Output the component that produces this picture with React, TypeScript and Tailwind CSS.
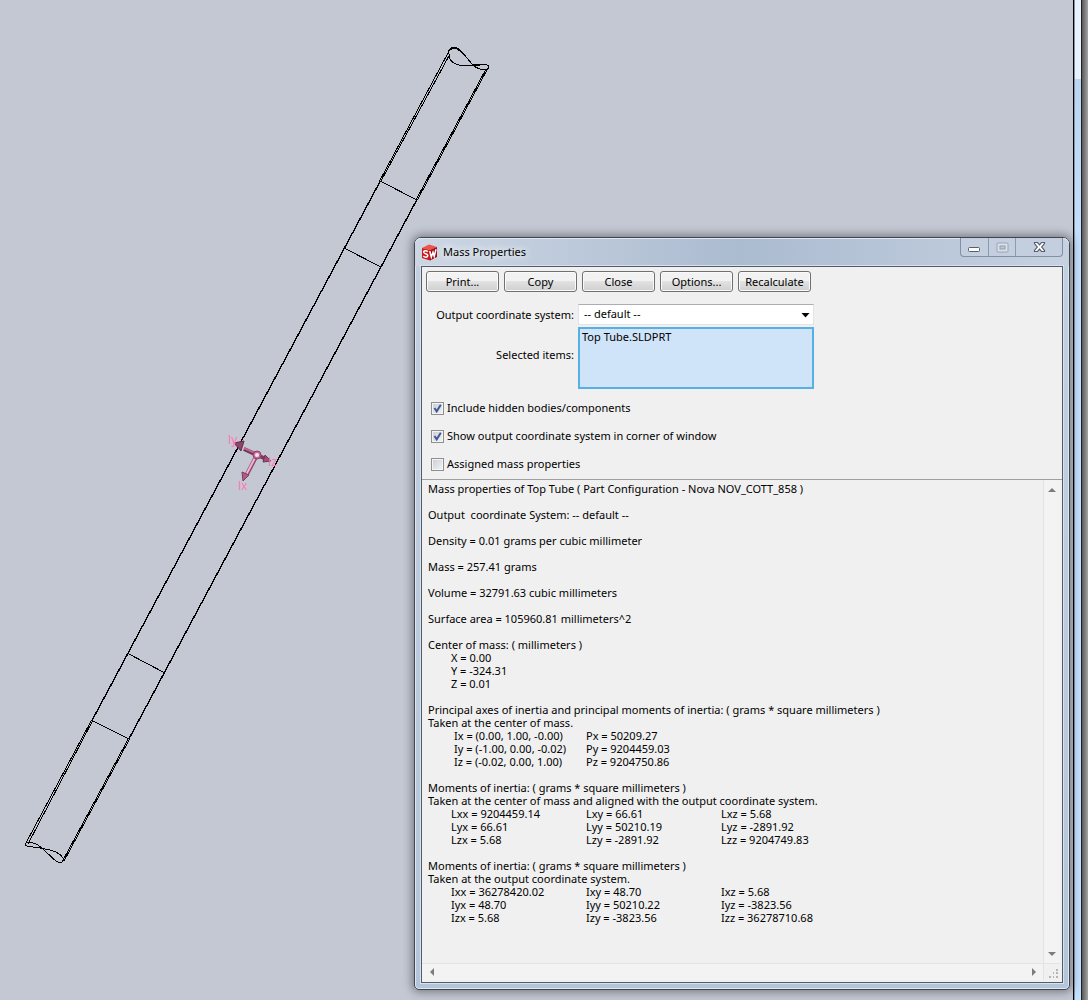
import { useState } from "react";
import type { ReactNode } from "react";

const toolbar = ["Print...", "Copy", "Close", "Options...", "Recalculate"];

const principal = [
  ["Ix = (0.00, 1.00, -0.00)", "Px = 50209.27"],
  ["Iy = (-1.00, 0.00, -0.02)", "Py = 9204459.03"],
  ["Iz = (-0.02, 0.00, 1.00)", "Pz = 9204750.86"],
];

const momentsAtCenter = [
  ["Lxx = 9204459.14", "Lxy = 66.61", "Lxz = 5.68"],
  ["Lyx = 66.61", "Lyy = 50210.19", "Lyz = -2891.92"],
  ["Lzx = 5.68", "Lzy = -2891.92", "Lzz = 9204749.83"],
];

const momentsAtOutput = [
  ["Ixx = 36278420.02", "Ixy = 48.70", "Ixz = 5.68"],
  ["Iyx = 48.70", "Iyy = 50210.22", "Iyz = -3823.56"],
  ["Izx = 5.68", "Izy = -3823.56", "Izz = 36278710.68"],
];

function TubeDrawing() {
  return (
    <svg
      className="absolute left-0 top-0"
      width="520"
      height="900"
      viewBox="0 0 520 900"
      fill="none"
    >
      <g stroke="#000" strokeWidth="1" shapeRendering="crispEdges">
        {/* tube walls: double at the butted ends, single in the middle */}
        <path d="M448 53 L379.6 181" />
        <path d="M450 54 L381 181" />
        <path d="M380.3 181 L92.3 720" strokeWidth="1.4" />
        <path d="M91.6 720 L26 843" />
        <path d="M93 720 L28 844" />
        <path d="M486 69 L416 200" />
        <path d="M488 68 L417.4 200" />
        <path d="M416.7 200 L128.9 739" strokeWidth="1.4" />
        <path d="M128.2 739 L62 862" />
        <path d="M129.6 739 L64 861" />
        {/* segment lines */}
        <path d="M380 181 L417 200" />
        <path d="M344 248 L381 267" />
        <path d="M127 653 L165 673" />
        <path d="M91 720 L129 739" />
        {/* mitred ends */}
        <path d="M448 54 C449 48 452 47 454 47 C461 48 466 58 474 66 C478 69 483 70 487 70 C489 68 489 65 487 65 C482 64 477 66 464 66 C455 65 449 62 449 54" />
        <path d="M450 50 C452 48 457 47 459 51" />
        <path d="M472 65 L487 64" />
        <path d="M26 843 C31 841 37 844 42 848 C48 853 53 860 58 862 C62 864 64 861 63 858 C60 853 52 850 45 849 C37 847 31 847 27 846 C25 845 25 844 26 843" />
      </g>

      {/* principal axes triad */}
      <g>
        <path d="M257 455 L244 449" stroke="#6d3452" strokeWidth="4" />
        <path d="M257 454 L244 448" stroke="#c0668f" strokeWidth="2" />
        <path d="M234 443 L244 441 L241 451 Z" fill="#8e4668" stroke="#5e2c46" strokeWidth="1" />
        <path d="M257 455 L266 459" stroke="#7c3c5c" strokeWidth="4" />
        <path d="M271 461 L263 462 L265 455 Z" fill="#a34f78" stroke="#6b3350" strokeWidth="1" />
        <path d="M257 455 L246 476" stroke="#8b4567" strokeWidth="4" />
        <path d="M256 456 L246 475" stroke="#f3b3d2" strokeWidth="2" />
        <path d="M243 481 L242 472 L249 475 Z" fill="#b45a86" stroke="#7b3c5c" strokeWidth="1" />
        <circle cx="257" cy="455" r="4" fill="#c46c97" stroke="#8b4567" />
        <circle cx="257" cy="455" r="2" fill="#ffe0ef" />
        <g fill="#ff78b8" className="font-['Liberation_Sans',sans-serif] text-[12px]">
          <text x="228" y="444">Iy</text>
          <text x="268" y="466">Iz</text>
          <text x="238" y="490">Ix</text>
        </g>
      </g>
    </svg>
  );
}

function AppIcon() {
  return (
    <svg width="17" height="17" viewBox="0 0 17 17">
      <path d="M1 4 L8 0.5 L16 3 L9 6 Z" fill="#f0524a" />
      <path d="M1 4 L9 6 L9 16.5 L1 14 Z" fill="#cb181d" />
      <path d="M9 6 L16 3 L16 13 L9 16.5 Z" fill="#a00b12" />
      <path
        d="M6.8 7.6 C5 6 2.3 6.6 2.8 8.4 C3.3 10 6.6 9.6 6.8 11.6 C6.8 13.6 4 13.6 2.3 12"
        fill="none"
        stroke="#fff"
        strokeWidth="1.5"
      />
      <path
        d="M8.8 7 L10.3 13.2 L12 8.3 L13.2 12.4 L15 5.2"
        fill="none"
        stroke="#fff"
        strokeWidth="1.5"
      />
    </svg>
  );
}

function CaptionButtons() {
  return (
    <div className="mr-[6px] flex h-[19px] self-start rounded-b border border-t-0 border-[#8390a3] bg-[#c3cedf]">
      <button aria-label="Minimize" className="flex w-7 items-center justify-center border-r border-[#8f9bad]">
        <svg width="13" height="13" viewBox="0 0 13 13">
          <rect x="0.5" y="6.5" width="11" height="4" rx="1" fill="#fff" stroke="#555e6b" />
        </svg>
      </button>
      <button aria-label="Maximize" disabled className="flex w-[27px] items-center justify-center border-r border-[#8f9bad]">
        <svg width="13" height="13" viewBox="0 0 13 13">
          <rect x="1" y="2" width="11" height="9" rx="1" fill="#d9e0ea" stroke="#98a4b5" />
          <rect x="4" y="5" width="5" height="3" fill="#bcc8d8" stroke="#8f9bad" />
        </svg>
      </button>
      <button aria-label="Close window" className="flex w-[46px] items-center justify-center">
        <svg width="13" height="12" viewBox="0 0 13 12">
          <path
            d="M1.5 1.5 H4.5 L6.5 3.8 L8.5 1.5 H11.5 V2.5 L8.7 6 L11.5 9.5 V10.5 H8.5 L6.5 8.2 L4.5 10.5 H1.5 V9.5 L4.3 6 L1.5 2.5 Z"
            fill="#fff"
            stroke="#555e6b"
            strokeWidth="1.2"
          />
        </svg>
      </button>
    </div>
  );
}

function CheckRow({ label, initial }: { label: string; initial: boolean }) {
  const [checked, setChecked] = useState(initial);
  return (
    <label className="flex h-7 items-center gap-[3px]">
      <span className="relative flex">
        <input
          type="checkbox"
          checked={checked}
          onChange={(e) => setChecked(e.target.checked)}
          className="h-[13px] w-[13px] appearance-none border border-[#8e8f8f] bg-linear-to-br from-[#c9cdd3] to-[#f4f4f4] shadow-[inset_0_0_0_1px_#f4f4f4]"
        />
        {checked && (
          <svg
            className="pointer-events-none absolute left-0 top-0"
            width="13"
            height="13"
            viewBox="0 0 13 13"
          >
            <path d="M3.5 6 L5.7 9.3 L9.8 2.8" fill="none" stroke="#40599c" strokeWidth="2" />
          </svg>
        )}
      </span>
      {label}
    </label>
  );
}

function Matrix({ rows, className }: { rows: string[][]; className: string }) {
  return (
    <table className={`border-collapse ${className}`}>
      <tbody>
        {rows.map((row) => (
          <tr key={row[0]}>
            {row.map((cell, i) => (
              <td key={cell} className={i === 0 ? "w-[158px] p-0" : "w-[135px] p-0"}>
                {cell}
              </td>
            ))}
          </tr>
        ))}
      </tbody>
    </table>
  );
}

function Block({ children }: { children: ReactNode }) {
  return <div className="mb-[13px]">{children}</div>;
}

function Report() {
  return (
    <div className="min-w-0 flex-1 pb-[26px] pl-[6px] pt-[2px] leading-[13px]">
      <Block>Mass properties of Top Tube ( Part Configuration - Nova NOV_COTT_858 )</Block>
      <Block>
        <span className="whitespace-pre">{"Output  coordinate System: -- default --"}</span>
      </Block>
      <Block>Density = 0.01 grams per cubic millimeter</Block>
      <Block>Mass = 257.41 grams</Block>
      <Block>Volume = 32791.63 cubic millimeters</Block>
      <Block>Surface area = 105960.81 millimeters^2</Block>
      <Block>
        <p>Center of mass: ( millimeters )</p>
        <div className="pl-[23px]">
          <p>X = 0.00</p>
          <p>Y = -324.31</p>
          <p>Z = 0.01</p>
        </div>
      </Block>
      <Block>
        <p>Principal axes of inertia and principal moments of inertia: ( grams * square millimeters )</p>
        <p>Taken at the center of mass.</p>
        <Matrix rows={principal} className="[&_td:first-child]:pl-[26px]" />
      </Block>
      <Block>
        <p>Moments of inertia: ( grams * square millimeters )</p>
        <p>Taken at the center of mass and aligned with the output coordinate system.</p>
        <Matrix rows={momentsAtCenter} className="[&_td:first-child]:pl-[23px]" />
      </Block>
      <Block>
        <p>Moments of inertia: ( grams * square millimeters )</p>
        <p>Taken at the output coordinate system.</p>
        <Matrix rows={momentsAtOutput} className="[&_td:first-child]:pl-[23px]" />
      </Block>
    </div>
  );
}

function Arrow({ d }: { d: string }) {
  return (
    <svg width="8" height="8" viewBox="0 0 8 8">
      <path d={d} fill="#7c7c7c" />
    </svg>
  );
}

function MassPropertiesDialog() {
  return (
    <section
      aria-label="Mass Properties"
      className="relative mb-[10px] ml-[414px] mr-[3px] mt-[237px] flex flex-1 flex-col rounded-b-[5px] rounded-t-[7px] border border-[#3f4650] bg-linear-to-b from-[#c3d0e0] to-[#b5c5d9] shadow-[0_0_10px_2px_rgba(0,0,0,0.4),inset_0_0_0_1px_#dfe8f2]"
    >
      <header className="flex h-7 items-center rounded-t-[6px] bg-linear-to-r from-[#cdd7e4] via-[#abbbd0] via-50% to-[#c6d1e1] pl-[6px] shadow-[inset_0_1px_0_#dfe8f2]">
        <AppIcon />
        <h1 className="ml-[5px] flex-1 [text-shadow:0_0_8px_#fff,0_0_8px_#fff]">Mass Properties</h1>
        <CaptionButtons />
      </header>

      <div className="mx-[6px] mb-[6px] flex flex-1 flex-col border border-[#515b69] bg-[#f0f0f0] shadow-[0_0_0_1px_#d8e2ee]">
        <div className="flex gap-[5px] pl-1 pt-1">
          {toolbar.map((label) => (
            <button
              key={label}
              className="h-[21px] w-[73px] rounded-[3px] border border-[#707070] bg-linear-to-b from-[#f2f2f2] from-50% via-[#e2e2e2] via-50% to-[#cfcfcf] leading-[19px] shadow-[inset_0_0_0_1px_#fafafa]"
            >
              {label}
            </button>
          ))}
        </div>

        <div className="mt-3 grid grid-cols-[152px_236px] items-center gap-x-1 gap-y-[2px]">
          <label htmlFor="csys" className="pt-px text-right">
            Output coordinate system:
          </label>
          <div className="relative">
            <select
              id="csys"
              className="block h-[21px] w-full appearance-none border border-[#e3e3ea] border-t-[#abadb3] bg-white pl-[5px]"
            >
              <option>-- default --</option>
            </select>
            <svg
              className="pointer-events-none absolute right-1 top-[9px]"
              width="9"
              height="5"
              viewBox="0 0 9 5"
            >
              <path d="M0.5 0 H8.5 L4.5 4.5 Z" fill="#000" />
            </svg>
          </div>
          <label htmlFor="items" className="pb-[5px] text-right">
            Selected items:
          </label>
          <select
            id="items"
            size={4}
            className="block h-[62px] w-full overflow-hidden border-2 border-[#56b0e4] bg-[#cfe4f8] pl-[2px] leading-[14px]"
          >
            <option className="min-h-0 p-0 leading-[14px]">Top Tube.SLDPRT</option>
          </select>
        </div>

        <div className="mt-[5px] pb-px pl-[9px]">
          <CheckRow label="Include hidden bodies/components" initial={true} />
          <CheckRow label="Show output coordinate system in corner of window" initial={true} />
          <CheckRow label="Assigned mass properties" initial={false} />
        </div>

        <div className="flex flex-1 flex-col border-t border-[#a0a0a0]">
          <div className="flex flex-1">
            <Report />
            <div className="mr-[2px] flex w-[17px] flex-col items-center justify-between border-l border-[#e3e3e3] bg-[#f3f3f3] pb-[5px] pt-[6px]">
              <Arrow d="M0 6 H8 L4 2 Z" />
              <Arrow d="M0 2 H8 L4 6 Z" />
            </div>
          </div>
          <div className="mb-[2px] mr-[2px] flex h-[17px] items-stretch border-t border-[#e3e3e3]">
            <div className="flex flex-1 items-center justify-between bg-[#f3f3f3] pl-[6px] pr-[5px]">
              <Arrow d="M6 0 V8 L2 4 Z" />
              <Arrow d="M2 0 V8 L6 4 Z" />
            </div>
            <div className="flex w-[17px] items-end justify-end border-l border-[#e3e3e3] pb-[2px] pr-[2px]">
              <svg width="9" height="9" viewBox="0 0 9 9" fill="#b4b4b4">
                <path d="M7 0h2v2h-2z M7 3h2v2h-2z M7 7h2v2h-2z M4 3h1v2h-1z M4 7h1v2h-1z M0 7h2v2h-2z" />
              </svg>
            </div>
          </div>
        </div>
      </div>
    </section>
  );
}

function WindowEdge() {
  return (
    <div className="flex w-[15px] shrink-0 border-l border-black">
      <div className="flex w-[7px] flex-col border-l border-[#7f95ad]">
        <div className="h-[79px] bg-[#e8f3fe]" />
        <div className="flex-1 bg-linear-to-b from-[#bcd6f0] to-[#c4e0ff] to-20%" />
      </div>
      <div className="w-px bg-[#1c1f24]" />
      <div className="flex-1 bg-linear-to-r from-[#5a5a5a] to-[#a6a6a6]" />
    </div>
  );
}

export default function App() {
  return (
    <div className="flex min-h-screen bg-[#c4c8d3] font-['Noto_Sans','Open_Sans',sans-serif] text-[11px] text-black">
      <main className="relative flex min-w-0 flex-1 flex-col">
        <TubeDrawing />
        <MassPropertiesDialog />
      </main>
      <WindowEdge />
    </div>
  );
}
